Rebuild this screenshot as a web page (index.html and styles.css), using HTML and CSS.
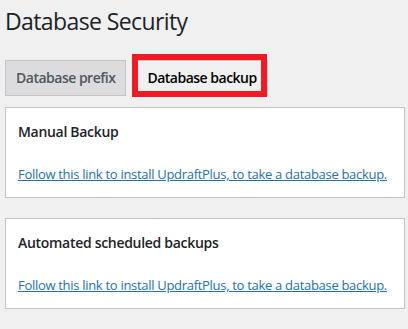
FILE: index.html
```html
<!DOCTYPE html>
<html lang="en">
<head>
  <meta charset="utf-8">
  <title>Database Security</title>
  <link rel="stylesheet" href="styles.css">
</head>
<body>
  <h1 class="page-title">Database Security</h1>

  <!-- tabs -->
  <div class="nav-tabs">
    <a class="nav-tab">Database prefix</a>
    <a class="nav-tab nav-tab-active">Database backup<span class="highlight"></span></a>
  </div>

  <div class="postbox">
    <h3 class="postbox-title">Manual Backup</h3>
    <a class="install-link" href="#">Follow this link to install UpdraftPlus, to take a database backup.</a>
  </div>

  <div class="postbox">
    <h3 class="postbox-title">Automated scheduled backups</h3>
    <a class="install-link" href="#">Follow this link to install UpdraftPlus, to take a database backup.</a>
  </div>
</body>
</html>
```

FILE: styles.css
```css
body {
  margin: 0;
  padding: 0 3px 0 5px;
  background-color: #f0f0f1;
  font-family: "Open Sans", "Noto Sans", sans-serif;
  color: #1d2327;
}

.page-title {
  margin: 0;
  padding: 7px 0 0 0;
  font-size: 23px;
  font-weight: 400;
  line-height: 29px;
  letter-spacing: -0.6px;
}

.nav-tabs {
  display: flex;
  margin-top: 24px;
}

.nav-tab {
  position: relative;
  display: block;
  padding: 5px 10px;
  border: 1px solid #c3c4c7;
  background-color: #dcdcde;
  color: #50575e;
  font-size: 14px;
  font-weight: 600;
  line-height: 24px;
  letter-spacing: -0.5px;
  text-decoration: none;
}

.nav-tab + .nav-tab {
  margin-left: 10px;
}

.nav-tab-active {
  background-color: #f0f0f1;
  color: #000;
}

/* red annotation box over the active tab */
.highlight {
  position: absolute;
  left: -5px;
  top: -7px;
  right: 0;
  bottom: -2px;
  border: 6px solid #ed1c24;
}

.postbox {
  margin-top: 11px;
  padding: 14px 12px 13px 12px;
  background-color: #fff;
  border: 1px solid #c3c4c7;
}

.postbox + .postbox {
  margin-top: 20px;
}

.postbox-title {
  margin: 0 0 22px 0;
  font-size: 14px;
  font-weight: 600;
  line-height: 20px;
  letter-spacing: -0.3px;
}

.install-link {
  display: block;
  color: #2271b1;
  font-size: 13px;
  line-height: 20px;
  letter-spacing: -0.3px;
}
```
